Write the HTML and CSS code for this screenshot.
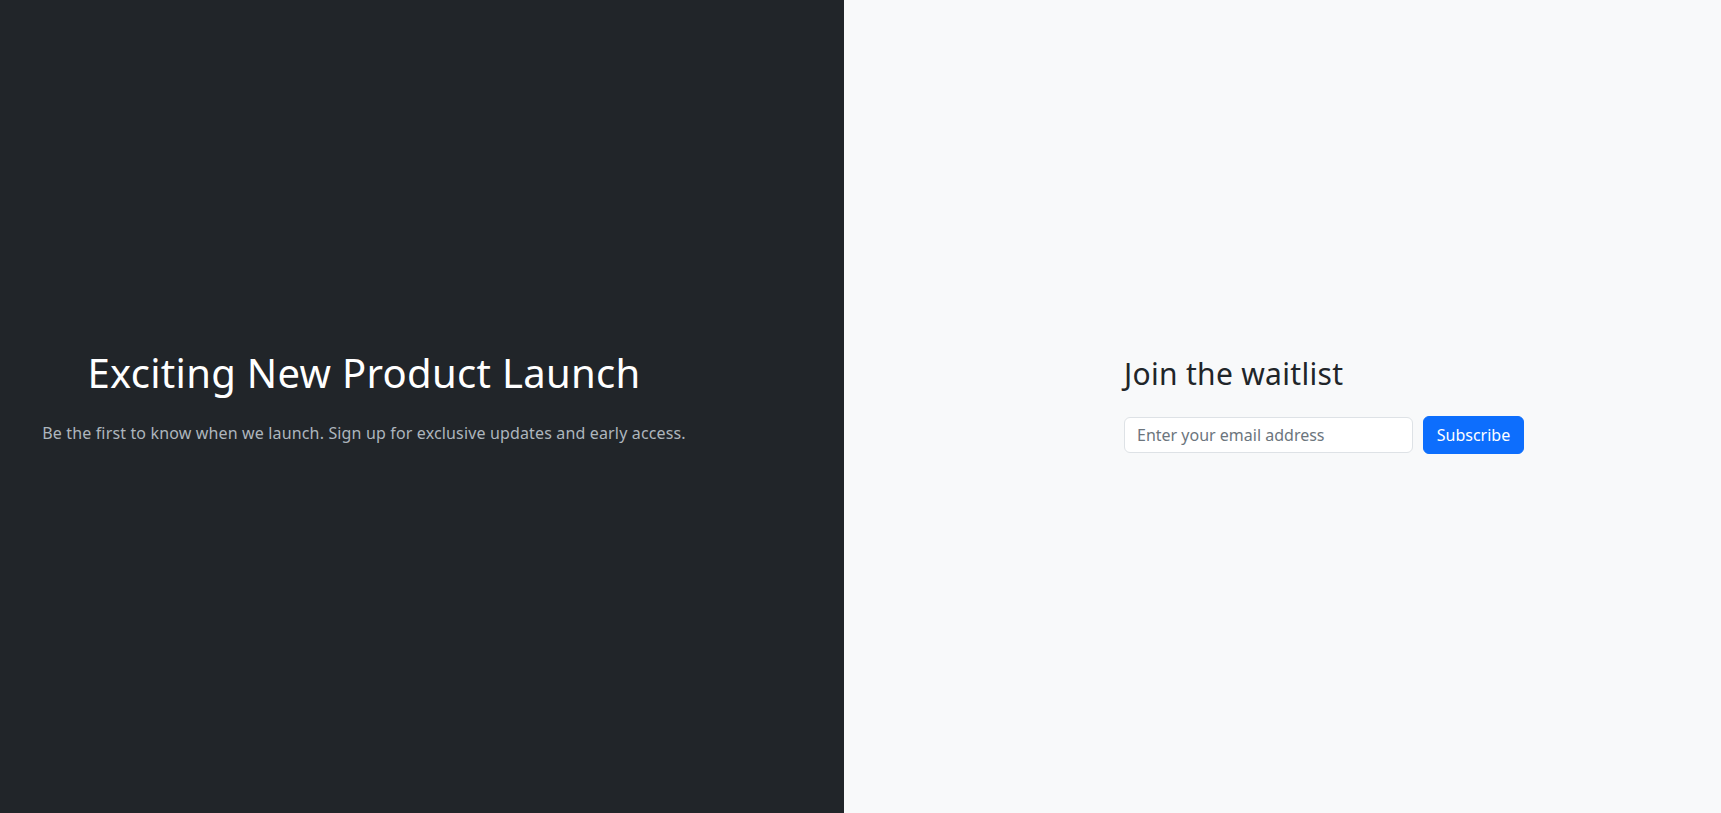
FILE: index.html
```html
<!DOCTYPE html>
<html lang="en">
<head>
<meta charset="utf-8">
<title>Exciting New Product Launch</title>
<link rel="stylesheet" href="styles.css">
</head>
<body>
<main class="split">
  <section class="panel panel-dark">
    <div class="intro">
      <h1 class="intro-title">Exciting New Product Launch</h1>
      <p class="intro-text">Be the first to know when we launch. Sign up for exclusive updates and early access.</p>
    </div>
  </section>
  <section class="panel panel-light">
    <div class="signup">
      <h2 class="signup-title">Join the waitlist</h2>
      <form class="signup-form" onsubmit="return false">
        <input class="email-input" type="email" placeholder="Enter your email address">
        <button class="btn-subscribe" type="submit">Subscribe</button>
      </form>
    </div>
  </section>
</main>
</body>
</html>
```

FILE: styles.css
```css
* { box-sizing: border-box; }
html, body { margin: 0; height: 100%; }
body {
  font-family: system-ui, -apple-system, "Segoe UI", Roboto, "Helvetica Neue", "Noto Sans", "Liberation Sans", Arial, sans-serif;
  font-size: 16px;
  line-height: 1.5;
  color: #212529;
}
.split {
  display: flex;
  height: 100vh;
}
.panel {
  display: flex;
  align-items: center;
  padding-bottom: 4px;
}
.panel-dark {
  flex: 0 0 844px;
  background: #212529;
  color: #fff;
  justify-content: center;
  padding-right: 116px;
}
.panel-light {
  flex: 1 1 auto;
  background: #f8f9fa;
  padding-left: 280px;
}
.intro { text-align: center; }
.intro-title {
  margin: 0 0 24px;
  font-size: 40px;
  font-weight: 400;
  line-height: 1.2;
  letter-spacing: 0.3px;
}
.intro-text {
  margin: 0 0 16px;
  color: #adb5bd;
  letter-spacing: 0.15px;
}
.signup-title {
  margin: 0 0 24px;
  font-size: 30px;
  font-weight: 400;
  line-height: 1.2;
  letter-spacing: 0.3px;
}
.signup-form {
  display: flex;
  gap: 10px;
}
.email-input {
  width: 289px;
  height: 36px;
  margin-top: 1px;
  padding: 6px 12px;
  font: inherit;
  color: #212529;
  background: #fff;
  border: 1px solid #dee2e6;
  border-radius: 6px;
}
.email-input::placeholder { color: #6c757d; }
.btn-subscribe {
  width: 101px;
  height: 38px;
  padding: 6px 12px;
  font: inherit;
  color: #fff;
  background: #0d6efd;
  border: 1px solid #0d6efd;
  border-radius: 6px;
}
```
